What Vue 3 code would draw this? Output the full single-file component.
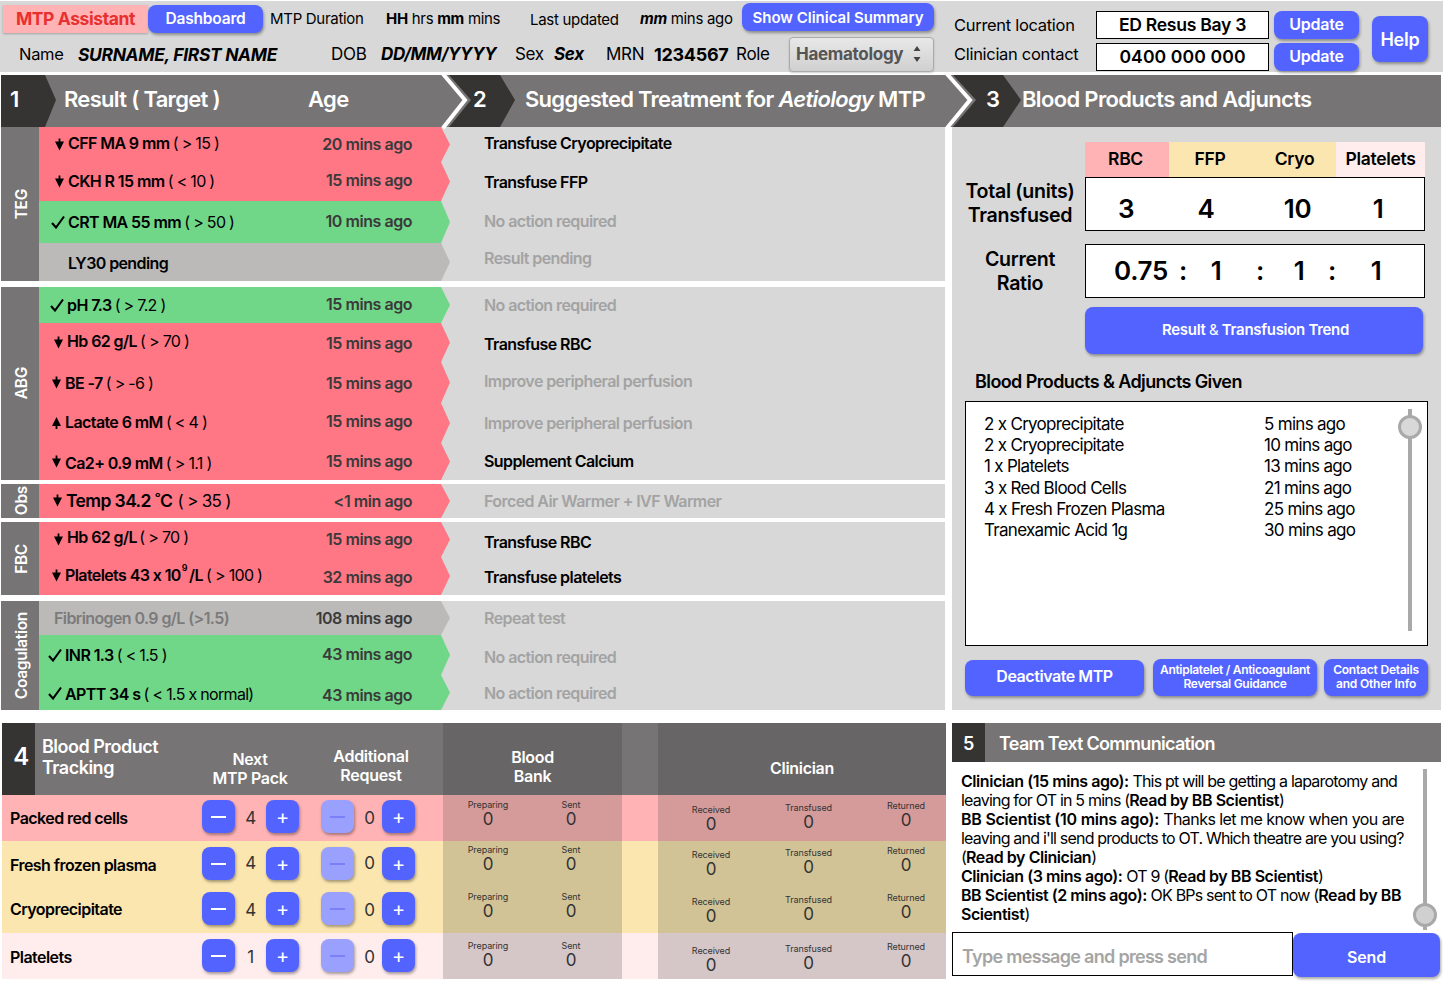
<template>
  <div class="page">
    <div class="topbar">
      <div class="top-left">
        <div class="top-row">
          <div class="brand">MTP Assistant</div>
          <button class="btn dash">Dashboard</button>
          <span class="t-dur">MTP Duration</span>
          <span class="t-hh"><b>HH</b> hrs <b>mm</b> mins</span>
          <span class="t-last">Last updated</span>
          <span class="t-ago"><b><i>mm</i></b> mins ago</span>
          <button class="btn summary">Show Clinical Summary</button>
        </div>
        <div class="top-row second">
          <span class="p-name">Name</span>
          <b class="p-sur"><i>SURNAME, FIRST NAME</i></b>
          <span class="p-dob">DOB</span>
          <b class="p-dd"><i>DD/MM/YYYY</i></b>
          <span class="p-sex">Sex</span>
          <b class="p-sexv"><i>Sex</i></b>
          <span class="p-mrn">MRN</span>
          <b class="p-num">1234567</b>
          <span class="p-role">Role</span>
          <div class="select">
            Haematology
            <svg width="10" height="20" viewBox="0 0 10 20"><path d="M5 2 L8.5 7 H1.5 Z M5 18 L8.5 13 H1.5 Z" fill="#444" /></svg>
          </div>
        </div>
      </div>
      <div class="top-right">
        <div class="contact-labels">
          <span>Current location</span>
          <span>Clinician contact</span>
        </div>
        <div class="contact-vals">
          <div class="contact-row"><div class="val-box">ED Resus Bay 3</div><button class="btn upd">Update</button></div>
          <div class="contact-row"><div class="val-box phone">0400 000 000</div><button class="btn upd">Update</button></div>
        </div>
        <button class="btn help">Help</button>
      </div>
    </div>

    <div class="steps">
      <div class="step-a">
        <div class="chev chev-1">
          <svg width="55" height="52" viewBox="0 0 55 52"><path d="M0 0 H44 L55 25 L44 52 H0 Z" fill="#353432" /></svg>
          <span class="chev-num">1</span>
        </div>
        <span class="h-result">Result ( Target )</span>
        <span class="h-age">Age</span>
      </div>
      <div class="step-b">
        <div class="chev chev-2">
          <svg width="73" height="52" viewBox="0 0 73 52">
            <path d="M7 0 H58 L73 25 L58 52 H7 L29 25 Z" fill="#353432" />
            <path d="M0 0 L23 25 L0 52" fill="#767474" />
            <path d="M1 -1 L23 25 L1 53" fill="none" stroke="#fff" stroke-width="4" />
          </svg>
          <span class="chev-num two">2</span>
        </div>
        <span class="h-treat">Suggested Treatment for <i>Aetiology</i> MTP</span>
      </div>
      <div class="step-c">
        <div class="chev chev-3">
          <svg width="75" height="52" viewBox="0 0 75 52">
            <path d="M7 0 H57 L75 25 L57 52 H7 L30 25 Z" fill="#353432" />
            <path d="M0 0 L24 25 L0 52" fill="#767474" />
            <path d="M1 -1 L24 25 L1 53" fill="none" stroke="#fff" stroke-width="4" />
          </svg>
          <span class="chev-num three">3</span>
        </div>
        <span class="h-blood">Blood Products and Adjuncts</span>
      </div>
    </div>

    <div class="middle">
      <div class="results">
        <div v-for="g in groups" :key="g.label" class="group">
          <div class="group-label"><span>{{ g.label }}</span></div>
          <div class="group-rows">
            <div v-for="r in g.rows" :key="r.main" class="row" :style="{ height: r.h + 'px' }">
              <div class="res" :class="r.kind">
                <span class="icon" :style="{ marginLeft: r.dx + 'px' }">
                  <svg v-if="r.icon === 'down'" width="11" height="14" viewBox="0 0 11 14"><path d="M4.6 0.5 H6.4 V3.5 H10 L5.5 12.5 L1 3.5 H4.6 Z" fill="#000" /></svg>
                  <svg v-else-if="r.icon === 'up'" width="11" height="14" viewBox="0 0 11 14"><path d="M4.6 13 H6.4 V10 H10 L5.5 1 L1 10 H4.6 Z" fill="#000" /></svg>
                  <svg v-else-if="r.icon === 'ok'" width="14" height="14" viewBox="0 0 14 14"><path d="M1 8 L5 12.5 L13 1.5" fill="none" stroke="#000" stroke-width="2.1" /></svg>
                </span>
                <span class="res-text" :class="{ faded: r.faded, big: r.big }" :style="{ top: r.dy[0] + 'px' }"><b>{{ r.main }}<sup v-if="r.sup">9</sup>{{ r.after }}</b> <span class="target">{{ r.target }}</span></span>
                <span class="age" :style="{ top: r.dy[1] + 'px' }">{{ r.age }}</span>
              </div>
              <div class="treat" :class="{ muted: r.muted }" :style="{ top: r.dy[2] + 'px' }">{{ r.treat }}</div>
            </div>
          </div>
        </div>
      </div>

      <div class="products">
        <div class="totals">
          <div class="tot-labels">
            <div class="tot-a">Total (units)<br>Transfused</div>
            <div class="tot-b">Current<br>Ratio</div>
          </div>
          <div class="tot-main">
            <div class="tot-heads">
              <span class="c-rbc">RBC</span>
              <span class="c-ffp">FFP</span>
              <span class="c-cryo">Cryo</span>
              <span class="c-plt">Platelets</span>
            </div>
            <div class="tot-box">
              <span v-for="(c, i) in totals" :key="i" :style="{ width: c.w + 'px' }">{{ c.t }}</span>
            </div>
            <div class="ratio-box">
              <span v-for="(c, i) in ratio" :key="i" :style="{ width: c.w + 'px' }">{{ c.t }}</span>
            </div>
            <button class="btn trend">Result <span class="thin">&amp;</span> Transfusion Trend</button>
          </div>
        </div>
        <div class="given-title">Blood Products &amp; Adjuncts Given</div>
        <div class="given-box">
          <div class="given-list">
            <div v-for="g in given" :key="g.age" class="given-row">
              <span>{{ g.item }}</span><span>{{ g.age }}</span>
            </div>
          </div>
          <div class="slider s1"><span class="thumb"></span></div>
        </div>
        <div class="given-btns">
          <button class="btn b-deact">Deactivate MTP</button>
          <button class="btn b-anti">Antiplatelet / Anticoagulant<br>Reversal Guidance</button>
          <button class="btn b-contact">Contact Details<br>and Other Info</button>
        </div>
      </div>
    </div>

    <div class="bottom">
      <div class="tracking">
        <div class="track-head track-grid">
          <div class="th-title">
            <span class="th-num">4</span>
            <span class="th-name">Blood Product<br>Tracking</span>
          </div>
          <div class="th-col next">Next<br>MTP Pack</div>
          <div class="th-col add">Additional<br>Request</div>
          <div class="th-col dark bank">Blood<br>Bank</div>
          <div></div>
          <div class="th-col dark clin">Clinician</div>
        </div>
        <div v-for="p in products" :key="p.name" class="track-row track-grid" :class="p.kind">
          <div class="p-label">{{ p.name }}</div>
          <div class="stepper pack">
            <button class="btn sq"><span class="dash-ic"></span></button>
            <span class="num">{{ p.next }}</span>
            <button class="btn sq plus">+</button>
          </div>
          <div class="stepper req">
            <button class="btn sq off"><span class="dash-ic"></span></button>
            <span class="num">0</span>
            <button class="btn sq plus">+</button>
          </div>
          <div class="shade bank-cells">
            <div class="cell"><small>Preparing</small><span>0</span></div>
            <div class="cell"><small>Sent</small><span>0</span></div>
          </div>
          <div></div>
          <div class="shade clin-cells">
            <div class="cell c1"><small>Received</small><span>0</span></div>
            <div class="cell c2"><small>Transfused</small><span>0</span></div>
            <div class="cell c3"><small>Returned</small><span>0</span></div>
          </div>
        </div>
      </div>

      <div class="team">
        <div class="team-head"><span class="team-num">5</span><span class="team-title">Team Text Communication</span></div>
        <div class="team-body">
          <div class="msgs">
            <div><b>Clinician (15 mins ago):</b> This pt will be getting a laparotomy and<br>leaving for OT in 5 mins (<b>Read by BB Scientist</b>)</div>
            <div><span class="wide"><b>BB Scientist (10 mins ago):</b> Thanks let me know when you are</span><br>leaving and i'll send products to OT. Which theatre are you using?<br>(<b>Read by Clinician</b>)</div>
            <div><b>Clinician (3 mins ago):</b> OT 9 (<b>Read by BB Scientist</b>)</div>
            <div><b>BB Scientist (2 mins ago):</b> OK BPs sent to OT now (<b>Read by BB</b><br><b>Scientist</b>)</div>
          </div>
          <div class="slider s2"><span class="thumb"></span></div>
        </div>
        <div class="send-row">
          <div class="send-input">Type message and press send</div>
          <button class="btn send">Send</button>
        </div>
      </div>
    </div>
  </div>
</template>

<script setup>
const row = (kind, icon, main, target, age, treat, h, dy, dx = 0, extra = {}) => ({ kind, icon, main, target, age, treat, h, dy, dx, muted: kind !== 'red', ...extra })

// dy nudges the result, age and treatment text separately
const groups = [
  {
    label: 'TEG',
    rows: [
      row('red', 'down', 'CFF MA 9 mm', '( > 15 )', '20 mins ago', 'Transfuse Cryoprecipitate', 35, [-2, -1, -2]),
      row('red', 'down', 'CKH R 15 mm', '( < 10 )', '15 mins ago', 'Transfuse FFP', 39, [-1, -2, 0]),
      row('green', 'ok', 'CRT MA 55 mm', '( > 50 )', '10 mins ago', 'No action required', 42, [0, -1, -1]),
      row('grey', '', 'LY30 pending', '', '', 'Result pending', 38, [1, 0, -4])
    ]
  },
  {
    label: 'ABG',
    rows: [
      row('green', 'ok', 'pH 7.3', '( > 7.2 )', '15 mins ago', 'No action required', 36, [0, -1, 0], -1),
      row('red', 'down', 'Hb 62 g/L', '( > 70 )', '15 mins ago', 'Transfuse RBC', 39, [-2, 0, 1], -1),
      row('red', 'down', 'BE -7', '( > -6 )', '15 mins ago', 'Improve peripheral perfusion', 41, [0, 0, -2], -3, { muted: true }),
      row('red', 'up', 'Lactate 6 mM', '( < 4 )', '15 mins ago', 'Improve peripheral perfusion', 40, [-1, -2, 0], -3, { muted: true }),
      row('red', 'down', 'Ca2+ 0.9 mM', '( > 1.1 )', '15 mins ago', 'Supplement Calcium', 37, [1, -1, -1], -3)
    ]
  },
  {
    label: 'Obs',
    rows: [
      row('red', 'down', 'Temp 34.2 ˚C', '( > 35 )', '<1 min ago', 'Forced Air Warmer + IVF Warmer', 34, [-1, 0, 0], -2, { muted: true, big: true })
    ]
  },
  {
    label: 'FBC',
    rows: [
      row('red', 'down', 'Hb 62 g/L ', '( > 70 )', '15 mins ago', 'Transfuse RBC', 35, [-3, -1, 2], -1),
      row('red', 'down', 'Platelets 43 x 10', '( > 100 )', '32 mins ago', 'Transfuse platelets', 38, [-1, 1, 1], -3, { sup: true, after: '/L' })
    ]
  },
  {
    label: 'Coagulation',
    rows: [
      row('grey', '', 'Fibrinogen 0.9 g/L (>1.5)', '', '108 mins ago', 'Repeat test', 34, [0, 0, 0], -14, { faded: true }),
      row('green', 'ok', 'INR 1.3', '( < 1.5 )', '43 mins ago', 'No action required', 40, [0, -1, 2], -3),
      row('green', 'ok', 'APTT 34 s', '( < 1.5 x normal)', '43 mins ago', 'No action required', 35, [1, 2, 0], -3)
    ]
  }
]

const totals = [
  { t: '3', w: 80 },
  { t: '4', w: 80 },
  { t: '10', w: 103 },
  { t: '1', w: 58 }
]

const ratio = [
  { t: '0.75', w: 52 },
  { t: ':', w: 34 },
  { t: '1', w: 32 },
  { t: ':', w: 56 },
  { t: '1', w: 22 },
  { t: ':', w: 44 },
  { t: '1', w: 44 }
]

const given = [
  { item: '2 x Cryoprecipitate', age: '5 mins ago' },
  { item: '2 x Cryoprecipitate', age: '10 mins ago' },
  { item: '1 x Platelets', age: '13 mins ago' },
  { item: '3 x Red Blood Cells', age: '21 mins ago' },
  { item: '4 x Fresh Frozen Plasma', age: '25 mins ago' },
  { item: 'Tranexamic Acid 1g', age: '30 mins ago' }
]

const products = [
  { name: 'Packed red cells', next: 4, kind: 'k-rbc' },
  { name: 'Fresh frozen plasma', next: 4, kind: 'k-ffp' },
  { name: 'Cryoprecipitate', next: 4, kind: 'k-ffp' },
  { name: 'Platelets', next: 1, kind: 'k-plt' }
]
</script>

<style>
html, body { margin: 0; background: #fff; }
</style>

<style scoped>
.page {
  width: 1443px;
  height: 983px;
  overflow: hidden;
  font-family: Inter, "Liberation Sans", sans-serif;
  color: #000;
  letter-spacing: -0.3px;
  background: #fff;
}
button { font-family: inherit; border: 0; padding: 0; letter-spacing: -0.2px; }
b { font-weight: 700; }

.btn {
  background: #5263ff;
  color: #fff;
  font-weight: 600;
  border-radius: 8px;
  box-shadow: 1px 2px 3px rgba(0, 0, 0, 0.35);
  text-align: center;
}

/* top bar */
.topbar {
  margin-top: 1px;
  height: 71px;
  background: #d8d8d8;
  display: flex;
}
.top-left { width: 950px; }
.top-row { height: 35px; display: flex; align-items: center; font-size: 15px; white-space: nowrap; }
.top-row.second { font-size: 17px; height: 36px; }
.brand {
  margin-left: 3px;
  width: 145px;
  height: 28px;
  line-height: 28px;
  text-align: center;
  background: #ffb3b5;
  color: #e8302f;
  font-weight: 700;
  font-size: 17.5px;
  letter-spacing: -0.4px;
  box-shadow: 0 1px 2px rgba(0, 0, 0, 0.25);
  flex: none;
}
.dash { width: 115px; height: 28px; font-size: 15.5px; flex: none; }
.t-dur { margin-left: 7px; width: 116px; }
.t-hh { width: 144px; }
.t-last { width: 110px; margin-top: 2px; }
.t-ago { width: 102px; }
.summary { width: 192px; height: 28px; font-size: 15px; margin-top: -3px; flex: none; letter-spacing: 0; }
.p-name { margin-left: 19px; width: 59px; font-size: 16.5px; }
.p-sur { width: 253px; font-size: 17.4px; }
.p-dob { width: 50px; }
.p-dd { width: 134px; }
.p-sex { width: 39px; }
.p-sexv { width: 52px; }
.p-mrn { width: 48px; }
.p-num { width: 82px; font-size: 18px; }
.p-role { width: 53px; }
.select {
  width: 145px;
  height: 35px;
  flex: none;
  display: flex;
  align-items: center;
  justify-content: space-between;
  padding: 0 11px 0 6px;
  box-sizing: border-box;
  border: 1px solid #aaa;
  border-radius: 4px;
  background: linear-gradient(#e8e8e8, #d0d0d0);
  color: #555;
  font-weight: 700;
  box-shadow: 0 1px 2px rgba(0, 0, 0, 0.2);
}
.top-right { flex: 1; display: flex; font-size: 16.5px; }
.contact-labels { width: 146px; padding: 14px 0 0 4px; box-sizing: border-box; display: flex; flex-direction: column; gap: 8px; }
.contact-labels span { line-height: 21px; white-space: nowrap; }
.contact-vals { padding-top: 10px; display: flex; flex-direction: column; gap: 4px; }
.contact-row { display: flex; gap: 5px; }
.val-box {
  width: 173px;
  height: 28px;
  box-sizing: border-box;
  border: 1px solid #000;
  background: #fff;
  text-align: center;
  line-height: 26px;
  font-weight: 600;
  font-size: 17.6px;
}
.val-box.phone { letter-spacing: 0.1px; }
.upd { width: 85px; height: 28px; font-size: 16px; padding-bottom: 2px; }
.help { width: 56px; height: 46px; margin: 15px 0 0 13px; font-size: 18px; }

/* section headers */
.steps { margin: 3px 0 0 1px; height: 52px; display: flex; color: #fff; font-weight: 600; }
.step-a, .step-b, .step-c { background: #767474; display: flex; align-items: center; white-space: nowrap; }
.step-a { width: 441px; }
.step-b { width: 504px; }
.step-c { flex: 1; margin-right: 2px; }
.chev { height: 52px; position: relative; flex: none; display: flex; align-items: center; }
.chev svg { position: absolute; left: 0; top: 0; display: block; overflow: visible; }
.chev-1 { width: 55px; }
.chev-2 { width: 73px; }
.chev-3 { width: 75px; }
.chev-num { position: relative; margin: 0 0 4px 9px; font-size: 22px; }
.chev-num.two { margin-left: 31px; }
.chev-num.three { margin-left: 40px; }
.h-result { margin: 0 0 5px 8px; width: 244px; font-size: 22px; letter-spacing: -0.7px; }
.h-age { font-size: 22px; margin-bottom: 5px; letter-spacing: -0.6px; }
.h-treat { margin: 0 0 5px 10px; font-size: 22px; letter-spacing: -0.72px; }
.h-blood { margin: 0 0 5px 1px; font-size: 22px; letter-spacing: -0.66px; }

/* results + treatment */
.middle { display: flex; margin-left: 1px; height: 583px; }
.results { width: 944px; display: flex; flex-direction: column; gap: 6px; }
.group { display: flex; }
.group:nth-child(3), .group:nth-child(4) { margin-top: -2px; }
.group-label {
  width: 38px;
  box-sizing: border-box;
  padding-left: 3px;
  background: #767474;
  color: #fff;
  font-weight: 600;
  font-size: 15.5px;
  display: flex;
  align-items: center;
  justify-content: center;
}
.group-label span { writing-mode: vertical-rl; transform: rotate(180deg); }
.group-rows { flex: 1; }
.row { display: flex; background: #d8d8d8; }
.res {
  width: 411px;
  flex: none;
  display: flex;
  align-items: center;
  clip-path: polygon(0 0, 402px 0, 411px 50%, 402px 100%, 0 100%);
  font-size: 16px;
}
.res.red { background: #ff7685; }
.res.green { background: #70d688; }
.res.grey { background: #bbbab8; }
.icon { width: 29px; display: flex; justify-content: flex-end; padding-right: 3px; box-sizing: border-box; flex: none; }
.res-text { flex: 1; white-space: nowrap; font-size: 16px; position: relative; }
.res-text b { font-weight: 600; letter-spacing: -0.6px; }
.res-text sup { font-size: 9px; line-height: 0; position: relative; top: -4px; margin: 0 2px 0 1px; }
.res-text.faded b { color: #7b7b7b; }
.res-text.big b { font-size: 17.5px; }
.target { font-weight: 400; letter-spacing: -0.7px; margin-left: -1px; }
.big .target { font-size: 17px; margin-left: 1px; }
.age { width: 130px; margin-right: 38px; text-align: right; font-weight: 600; color: #3a3a3a; white-space: nowrap; position: relative; letter-spacing: -0.45px; }
.treat { padding-left: 34px; display: flex; align-items: center; font-weight: 600; font-size: 16px; position: relative; letter-spacing: -0.58px; }
.treat.muted { color: #a3a3a3; }

/* products */
.products { margin-left: 7px; width: 489px; background: #d8d8d8; box-sizing: border-box; padding: 15px 13px 0; }
.totals { display: flex; }
.tot-labels { width: 110px; margin-right: 10px; text-align: center; font-weight: 600; font-size: 19.6px; line-height: 24px; white-space: nowrap; }
.tot-a { margin-top: 37px; }
.tot-b { margin-top: 20px; }
.tot-main { width: 340px; }
.tot-heads { display: flex; height: 35px; line-height: 34px; font-size: 17.5px; font-weight: 600; text-align: center; letter-spacing: -0.3px; }
.c-rbc { width: 84px; background: #ffb3b5; padding-right: 3px; box-sizing: border-box; }
.c-ffp { width: 84px; background: #fbe6b0; padding-right: 2px; box-sizing: border-box; }
.c-cryo { width: 83px; background: #fbe6b0; }
.c-plt { width: 89px; background: #ffecec; }
.tot-box, .ratio-box {
  box-sizing: border-box;
  height: 54px;
  border: 1px solid #000;
  background: #fff;
  display: flex;
  align-items: center;
  font-size: 26px;
  font-weight: 600;
  text-align: center;
}
.tot-box { padding-top: 9px; }
.ratio-box { margin-top: 13px; padding: 0 0 2px 28px; }
.ratio-box span { flex: none; white-space: nowrap; display: block; }
.trend { width: 338px; height: 47px; margin-top: 9px; font-size: 15px; display: block; letter-spacing: -0.3px; padding: 0 0 2px 3px; }
.thin { font-weight: 400; }
.given-title { margin: 17px 0 0 10px; font-size: 18px; font-weight: 600; line-height: 22px; letter-spacing: -0.6px; }
.given-box {
  margin-top: 8px;
  height: 245px;
  box-sizing: border-box;
  border: 1px solid #000;
  background: #fff;
  position: relative;
  padding: 12px 18px;
  font-size: 17px;
  line-height: 21.2px;
  letter-spacing: -0.7px;
}
.given-row { display: flex; }
.given-row span:first-child { width: 280px; }
.slider { position: absolute; width: 4px; background: #a9a9a9; }
.s1 { right: 15px; top: 7px; height: 222px; }
.s1 .thumb { top: 6px; }
.thumb {
  position: absolute;
  left: -10px;
  width: 24px;
  height: 24px;
  box-sizing: border-box;
  border: 3px solid #a9a9a9;
  border-radius: 50%;
  background: #d8d8d8;
}
.given-btns { display: flex; margin-top: 13px; align-items: flex-start; }
.b-deact { width: 179px; height: 36px; margin-top: 1px; font-size: 16px; padding-bottom: 5px; letter-spacing: -0.45px; }
.b-anti { width: 164px; height: 37px; margin-left: 9px; font-size: 12px; line-height: 14px; letter-spacing: -0.3px; padding-bottom: 2px; }
.b-contact { width: 104px; height: 37px; margin-left: 7px; font-size: 12px; line-height: 14px; padding-bottom: 1px; }

/* tracking */
.bottom { display: flex; margin-top: 13px; }
.tracking { width: 944px; margin-left: 2px; }
.track-grid { display: grid; grid-template-columns: 200px 119px 122px 179px 36px 288px; }
.track-head { height: 72px; background: #767474; color: #fff; font-weight: 600; }
.th-title { display: flex; }
.th-num {
  width: 33px;
  box-sizing: border-box;
  padding-left: 5px;
  background: #353432;
  text-align: center;
  line-height: 68px;
  font-size: 24px;
  flex: none;
}
.th-name { margin: 13px 0 0 7px; font-size: 18px; line-height: 21px; white-space: nowrap; letter-spacing: -0.5px; }
.th-col { font-size: 16px; line-height: 19px; text-align: center; display: flex; align-items: center; justify-content: center; padding-top: 17px; box-sizing: border-box; }
.th-col.next { margin-left: -22px; width: 140px; padding-top: 20px; }
.th-col.add { padding-top: 14px; margin-left: -11px; width: 122px; }
.th-col.dark { background: #676565; }
.bank { padding-top: 16px; }
.clin { padding-top: 18px; }
.track-row { height: 46px; }
.track-row.k-rbc { background: #ffb3b5; }
.track-row.k-ffp { background: #fbe6b0; }
.track-row.k-plt { background: #ffecec; }
.k-rbc .shade { background: #d59a9a; }
.k-ffp .shade { background: #d2c396; }
.k-plt .shade { background: #d5c6c8; }
.p-label { font-size: 16px; font-weight: 600; padding-left: 8px; display: flex; align-items: center; white-space: nowrap; letter-spacing: -0.55px; }
.track-row:nth-child(3) .p-label, .k-plt .p-label { padding-top: 2px; }
.track-row:nth-child(4) .p-label { padding-bottom: 2px; }
.stepper { display: flex; align-items: flex-start; padding-top: 5px; font-size: 17px; }
.track-row:nth-child(3) .stepper, .k-plt .stepper { padding-top: 6px; }
.track-row:nth-child(3) .num { margin-top: 0; }
.track-row:nth-child(3) .cell { margin-top: -1px; }
.k-plt .cell { margin-top: 3px; }
.stepper.pack { width: 97px; justify-content: space-between; }
.stepper.req { width: 94px; justify-content: space-between; }
.stepper .num { font-weight: 400; color: #333; line-height: 33px; margin-top: 2px; }
.req .num { margin-left: 3px; }
.sq { width: 33px; height: 33px; display: flex; align-items: center; justify-content: center; font-size: 20px; font-weight: 400; flex: none; }
.sq.off { background: #9aa0fd; }
.dash-ic { width: 15px; height: 2px; background: #fff; }
.off .dash-ic { background: #7a80f8; }
.shade { display: flex; }
.bank-cells { padding-left: 15px; gap: 23px; }
.clin-cells { padding-left: 23px; gap: 37.5px; }
.cell { width: 60px; display: flex; flex-direction: column; align-items: center; flex: none; padding-top: 4px; }
.cell small { font-size: 9px; line-height: 11px; color: #333; letter-spacing: -0.1px; white-space: nowrap; }
.cell span { font-size: 17px; line-height: 18px; color: #333; }
.c1 { padding-top: 9px; }
.c2 { padding-top: 7px; }
.c3 { padding-top: 5px; }

/* team */
.team { margin-left: 6px; width: 489px; }
.team-head { height: 39px; background: #767474; color: #fff; display: flex; align-items: center; font-weight: 600; font-size: 18px; }
.team-num { width: 33px; height: 39px; box-sizing: border-box; padding-top: 2px; line-height: 37px; text-align: center; background: #353432; }
.team-title { margin-left: 14px; letter-spacing: -0.7px; padding-top: 2px; }
.team-body { height: 170px; position: relative; box-sizing: border-box; padding: 10px 20px 0 9px; font-size: 16px; line-height: 19px; letter-spacing: -0.8px; white-space: nowrap; }
.team-body b { font-weight: 600; letter-spacing: -0.45px; }
.team-body .wide b { letter-spacing: -0.25px; }
.team-body .wide { letter-spacing: -0.55px; }
.s2 { right: 14px; top: 7px; height: 161px; }
.s2 .thumb { top: 134px; background: #d0d0d0; }
.send-row { display: flex; }
.send-input {
  width: 341px;
  height: 44px;
  box-sizing: border-box;
  border: 1px solid #000;
  background: #fff;
  padding: 3px 0 0 9px;
  line-height: 42px;
  color: #a5a5a5;
  font-size: 18px;
  font-weight: 600;
  letter-spacing: -0.7px;
}
.send { width: 147px; height: 44px; margin-top: 1px; font-size: 16px; padding-top: 3px; }
</style>
